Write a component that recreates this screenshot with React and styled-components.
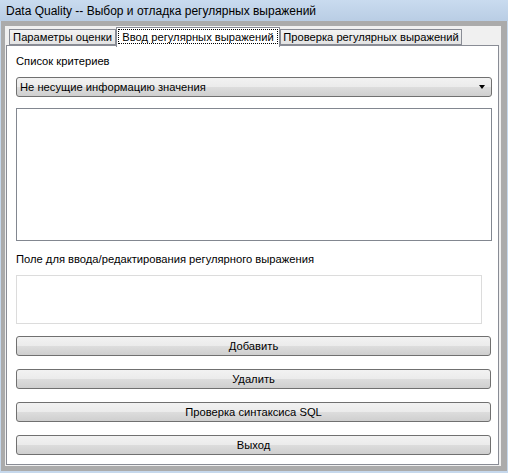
import React from "react";
import styled, { createGlobalStyle } from "styled-components";

const GlobalStyle = createGlobalStyle`
  html, body {
    margin: 0;
    padding: 0;
    background: #ffffff;
  }
  body {
    font-family: "Liberation Sans", Arial, sans-serif;
    font-size: 11.2px;
    color: #000000;
  }
`;

const tabs = [
  { label: "Параметры оценки", width: 107 },
  { label: "Ввод регулярных выражений", width: 164, active: true },
  { label: "Проверка регулярных выражений", width: 182 },
];

const buttons = ["Добавить", "Удалить", "Проверка синтаксиса SQL", "Выход"];

export default function App() {
  return (
    <>
      <GlobalStyle />
      <Window>
        <TitleBar>Data Quality -- Выбор и отладка регулярных выражений</TitleBar>
        <Frame>
          <Client>
            <TabStrip>
              {tabs.map((tab) => (
                <Tab key={tab.label} $active={tab.active} $width={tab.width}>
                  {tab.active ? <FocusRect>{tab.label}</FocusRect> : tab.label}
                </Tab>
              ))}
            </TabStrip>
            <Pane>
              <Label $top={8}>Список критериев</Label>
              <Combo>
                <ComboText>Не несущие информацию значения</ComboText>
                <ComboArrow />
              </Combo>
              <ListBox />
              <Label $top={11}>Поле для ввода/редактирования регулярного выражения</Label>
              <EditField />
              <ButtonColumn>
                {buttons.map((b) => (
                  <Button key={b}>{b}</Button>
                ))}
              </ButtonColumn>
            </Pane>
          </Client>
        </Frame>
      </Window>
    </>
  );
}

const Window = styled.div`
  width: 508px;
  height: 473px;
  box-sizing: border-box;
  padding: 0 1px 2px 1px;
  background: #c6d8ec;
  display: flex;
  flex-direction: column;
`;

const TitleBar = styled.div`
  height: 21px;
  margin: 0 -1px;
  padding-left: 6px;
  display: flex;
  align-items: center;
  background: linear-gradient(#c9dbef, #b9cde4);
  font-size: 12px;
  color: #000000;
  white-space: nowrap;
`;

const Frame = styled.div`
  flex: 1;
  display: flex;
  padding: 5px 6px 5px 4px;
  background: #ababab;
`;

const Client = styled.div`
  flex: 1;
  display: flex;
  flex-direction: column;
  padding: 1px 2px 1px 1px;
  background: #f0f0f0;
`;

const TabStrip = styled.div`
  height: 18px;
  display: flex;
  align-items: flex-end;
  padding-left: 3px;
  position: relative;
  z-index: 1;
`;

const Tab = styled.div`
  box-sizing: border-box;
  width: ${({ $width }) => $width}px;
  height: ${({ $active }) => ($active ? 20 : 16)}px;
  margin-bottom: ${({ $active }) => ($active ? -2 : 0)}px;
  display: flex;
  align-items: center;
  justify-content: center;
  border: 1px solid #898c95;
  border-bottom: ${({ $active }) => ($active ? "none" : "1px solid #898c95")};
  background: ${({ $active }) =>
    $active ? "#ffffff" : "linear-gradient(#f3f3f3, #e3e3e3)"};
  padding-bottom: ${({ $active }) => ($active ? 2 : 0)}px;
  white-space: nowrap;
`;

const FocusRect = styled.span`
  box-sizing: border-box;
  display: flex;
  align-items: center;
  justify-content: center;
  width: calc(100% - 2px);
  height: 15px;
  border: 1px dotted #000000;
`;

const Pane = styled.div`
  flex: 1;
  display: flex;
  flex-direction: column;
  border: 1px solid #898c95;
  background: #ffffff;
  padding: 0 0 0 9px;
`;

const Label = styled.div`
  margin-top: ${({ $top }) => $top}px;
  height: 14px;
  line-height: 14px;
  white-space: nowrap;
`;

const Combo = styled.div`
  box-sizing: border-box;
  margin-top: 9px;
  width: 476px;
  height: 20px;
  display: flex;
  align-items: center;
  justify-content: space-between;
  padding: 0 6px 0 3px;
  border: 1px solid #707070;
  border-radius: 3px;
  background: linear-gradient(#f2f2f2 0%, #ebebeb 50%, #dddddd 50%, #cfcfcf 100%);
`;

const ComboText = styled.span`
  white-space: nowrap;
`;

const ComboArrow = styled.span`
  width: 0;
  height: 0;
  border-left: 3.5px solid transparent;
  border-right: 3.5px solid transparent;
  border-top: 4px solid #000000;
`;

const ListBox = styled.div`
  box-sizing: border-box;
  margin-top: 11px;
  width: 476px;
  height: 133px;
  border: 1px solid #828790;
  background: #ffffff;
`;

const EditField = styled.div`
  box-sizing: border-box;
  margin-top: 9px;
  width: 466px;
  height: 49px;
  border: 1px solid #dcdcdc;
  background: #ffffff;
`;

const ButtonColumn = styled.div`
  margin-top: 12px;
  display: flex;
  flex-direction: column;
  gap: 13px;
`;

const Button = styled.div`
  box-sizing: border-box;
  width: 475px;
  height: 20px;
  display: flex;
  align-items: center;
  justify-content: center;
  border: 1px solid #707070;
  border-radius: 3px;
  background: linear-gradient(#f2f2f2 0%, #ebebeb 50%, #dddddd 50%, #cfcfcf 100%);
  white-space: nowrap;
`;
